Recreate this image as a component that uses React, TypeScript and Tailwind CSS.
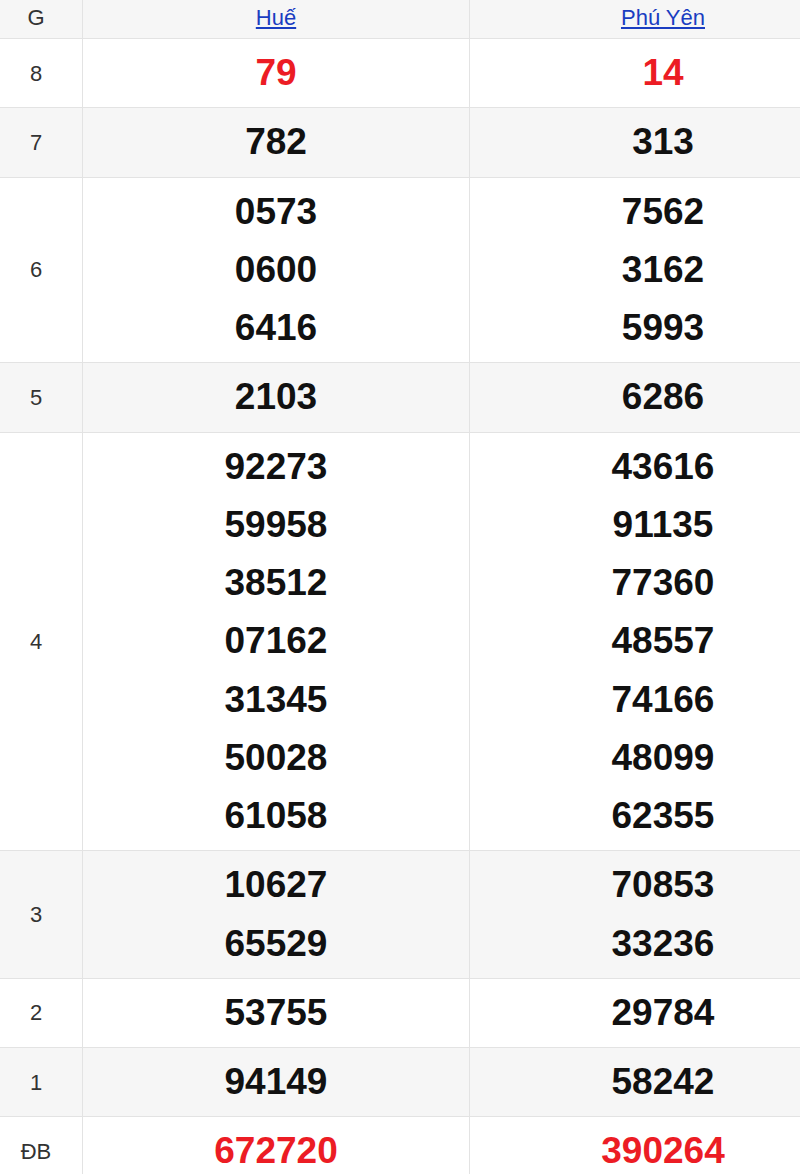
import type { FC } from "react";

type Row = {
  label: string;
  hue: string[];
  phuYen: string[];
  red?: boolean;
};

const rows: Row[] = [
  { label: "8", hue: ["79"], phuYen: ["14"], red: true },
  { label: "7", hue: ["782"], phuYen: ["313"] },
  { label: "6", hue: ["0573", "0600", "6416"], phuYen: ["7562", "3162", "5993"] },
  { label: "5", hue: ["2103"], phuYen: ["6286"] },
  {
    label: "4",
    hue: ["92273", "59958", "38512", "07162", "31345", "50028", "61058"],
    phuYen: ["43616", "91135", "77360", "48557", "74166", "48099", "62355"]
  },
  { label: "3", hue: ["10627", "65529"], phuYen: ["70853", "33236"] },
  { label: "2", hue: ["53755"], phuYen: ["29784"] },
  { label: "1", hue: ["94149"], phuYen: ["58242"] },
  { label: "ĐB", hue: ["672720"], phuYen: ["390264"], red: true }
];

const Numbers: FC<{ values: string[]; red?: boolean }> = ({ values, red }) => (
  <div className="flex flex-col items-center justify-center py-[5px] border-r border-[#e3e3e3]">
    {values.map((v) => (
      <span
        key={v}
        className={`block text-[37px] font-bold leading-[58.25px] ${red ? "text-[#ec1c24]" : "text-[#111]"}`}
      >
        {v}
      </span>
    ))}
  </div>
);

export default function App() {
  return (
    <div className="w-[800px] h-[1174px] overflow-hidden bg-white font-['Liberation_Sans',Arial,sans-serif]">
      <div className="w-[857px]">
        <div className="grid grid-cols-[83px_387px_387px] h-[39px] bg-[#f6f6f6] border-b border-[#e3e3e3]">
          <div className="flex items-center justify-center pr-[10px] pb-[4px] border-r border-[#e3e3e3] text-[22px] text-[#333]">
            G
          </div>
          <div className="flex items-center justify-center pb-[4px] border-r border-[#e3e3e3]">
            <a href="#" className="text-[22px] text-[#1a3dc1] underline">Huế</a>
          </div>
          <div className="flex items-center justify-center pb-[4px] border-r border-[#e3e3e3]">
            <a href="#" className="text-[22px] text-[#1a3dc1] underline">Phú Yên</a>
          </div>
        </div>
        {rows.map((row, i) => (
          <div
            key={row.label}
            className={`grid grid-cols-[83px_387px_387px] border-b border-[#e3e3e3] ${i % 2 === 1 ? "bg-[#f6f6f6]" : "bg-white"}`}
          >
            <div className="flex items-center justify-center pr-[10px] border-r border-[#e3e3e3] text-[22px] text-[#333]">
              {row.label}
            </div>
            <Numbers values={row.hue} red={row.red}/>
            <Numbers values={row.phuYen} red={row.red}/>
          </div>
        ))}
      </div>
    </div>
  );
}
